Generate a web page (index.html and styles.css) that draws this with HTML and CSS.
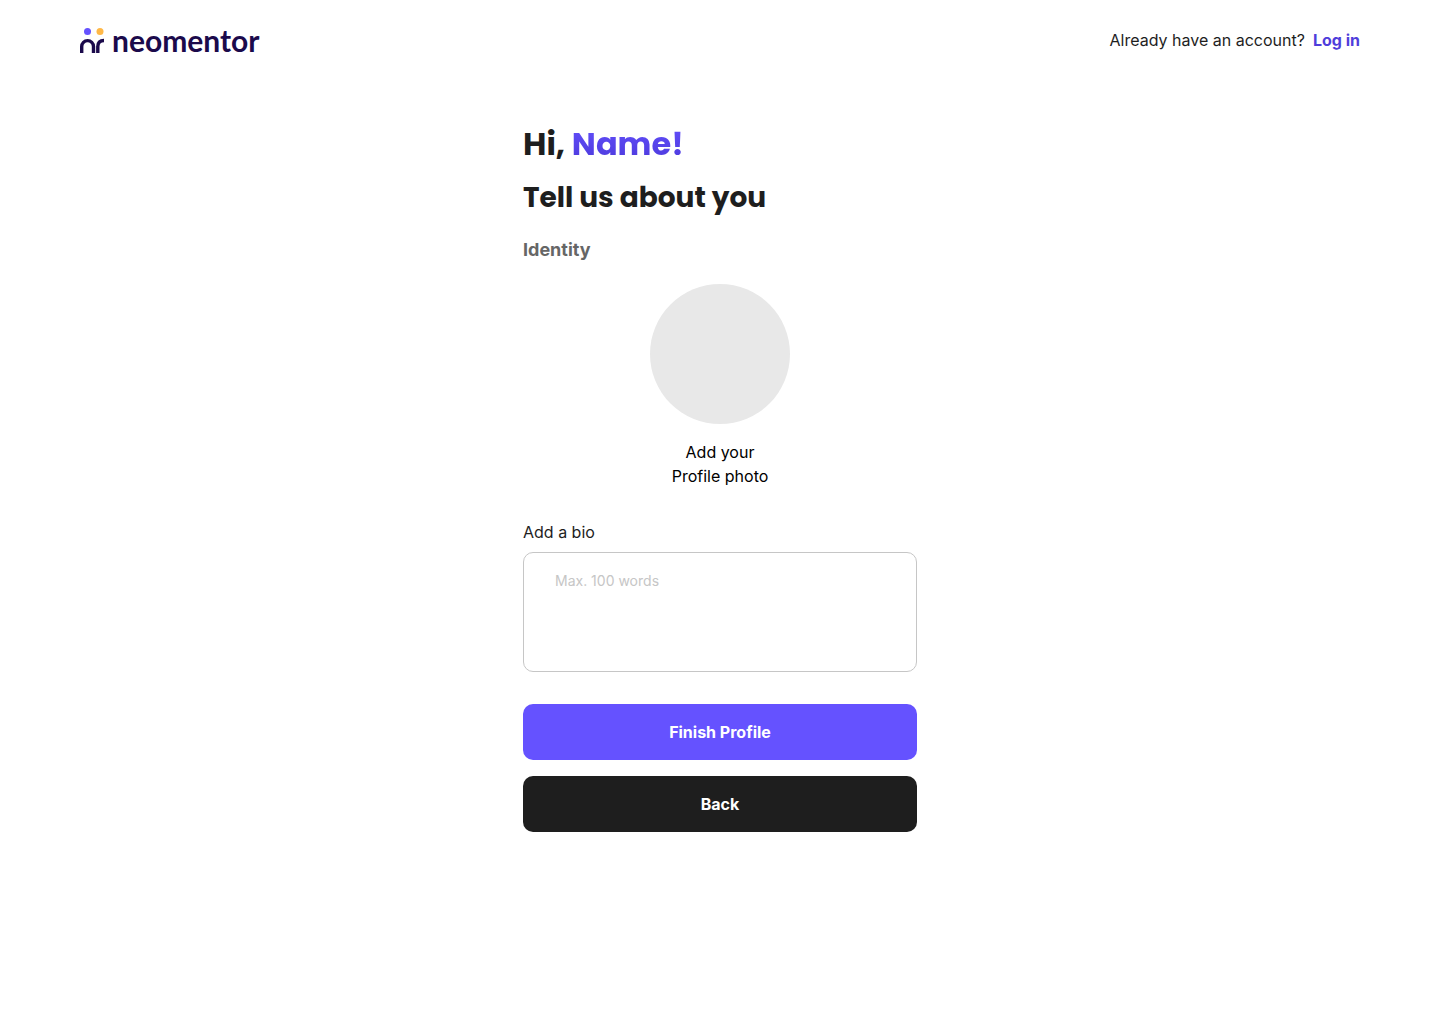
FILE: index.html
```html
<!DOCTYPE html>
<html lang="en">
<head>
<meta charset="utf-8">
<meta name="viewport" content="width=device-width, initial-scale=1">
<title>neomentor – Your profile</title>
<link rel="stylesheet" href="styles.css">
</head>
<body>
<header class="site-header">
  <a class="brand" href="#">
    <svg class="brand-mark" viewBox="0 0 24 26" aria-hidden="true">
      <circle cx="7.5" cy="4.5" r="3.5" fill="#6552ff"/>
      <circle cx="20" cy="4.5" r="3.5" fill="#ffb847"/>
      <path d="M1.700 26v-6.500a5.900 5.900 0 0 1 11.800 0V26M17.800 26v-6.500q0-6 6.200-6" fill="none" stroke="#1b0a4b" stroke-width="3.4"/>
    </svg>
    <span class="brand-name">neomentor</span>
  </a>
  <p class="account">Already have an account? <a class="login" href="#">Log in</a></p>
</header>
<main class="profile">
  <h1 class="greeting">Hi, <span class="name">Name!</span></h1>
  <h2 class="title">Tell us about you</h2>
  <h3 class="section">Identity</h3>
  <form class="form">
    <button class="photo" type="button">
      <span class="avatar"></span>
      <span class="photo-text">Add your<br>Profile photo</span>
    </button>
    <label class="bio-label" for="bio">Add a bio</label>
    <textarea class="bio" id="bio" placeholder="Max. 100 words"></textarea>
    <div class="actions">
      <button class="button primary" type="submit">Finish Profile</button>
      <button class="button dark" type="button">Back</button>
    </div>
  </form>
</main>
</body>
</html>
```

FILE: styles.css
```css
* { box-sizing: border-box; }
body { margin: 0; background: #fff; color: #1e1e1e; font: 16px/24px Inter, sans-serif; }
.site-header { display: flex; justify-content: space-between; align-items: center; padding: 20px 80px; }
.brand { display: flex; align-items: center; gap: 8px; height: 40px; color: #1b0a4b; text-decoration: none; }
.brand-mark { width: 24px; height: 26px; }
.brand-name { font: 700 30px/40px Lato, sans-serif; }
.account { display: flex; gap: 8px; margin: 0; }
.login { color: #4f3ddb; font-weight: 700; text-decoration: none; }
.profile { width: 100%; max-width: 394px; margin: 40px auto; }
.greeting, .title, .section { margin: 0; }
.greeting { font: 700 32px/48px Poppins, Inter, sans-serif; }
.name { background: linear-gradient(#6552ff, #4a37d8); background-clip: text; -webkit-background-clip: text; color: transparent; }
.title { margin-top: 8px; font: 700 28px/44px Poppins, Inter, sans-serif; }
.section { margin-top: 18px; font-size: 18px; line-height: 24px; color: #666; }
.form { display: flex; flex-direction: column; margin-top: 22px; }
.photo { display: flex; flex-direction: column; align-items: center; align-self: center; gap: 16px; padding: 0; border: 0; background: none; color: #000; font: inherit; cursor: pointer; }
.avatar { width: 140px; height: 140px; border-radius: 50%; background: #e8e8e8; }
.bio-label { margin-top: 32px; }
.bio { height: 120px; margin-top: 8px; padding: 16px 31px; border: 1px solid #c6c6c6; border-radius: 10px; background: #fff; color: inherit; font: 14px/24px Inter, sans-serif; resize: none; }
.bio::placeholder { color: #c6c6c6; opacity: 1; }
.actions { display: flex; flex-direction: column; gap: 16px; margin-top: 32px; }
.button { height: 56px; border: 0; border-radius: 10px; color: #fff; font: 700 16px/24px Inter, sans-serif; cursor: pointer; }
.primary { background: #6552ff; }
.dark { background: #1e1e1e; }
```
